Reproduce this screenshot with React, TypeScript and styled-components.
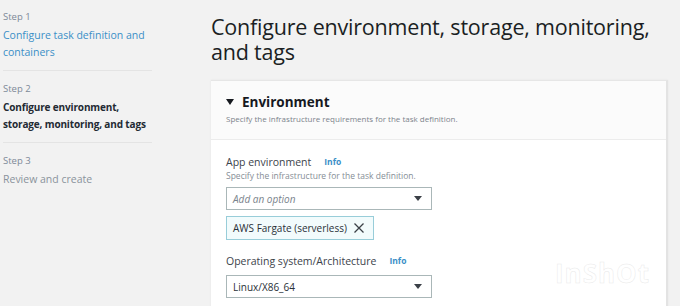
import React from "react";
import styled, { createGlobalStyle } from "styled-components";

const Global = createGlobalStyle`
  html, body { margin: 0; padding: 0; background: #f2f2f2; }
  body { font-family: "Open Sans", "Noto Sans", Arial, sans-serif; color: #16191f; }
`;

const Page = styled.div`
  width: 680px;
  height: 306px;
  overflow: hidden;
  display: grid;
  grid-template-columns: 149px 1fr;
  column-gap: 59px;
  padding-left: 3px;
  box-sizing: border-box;
  background: #f2f2f2;
  position: relative;
`;

const Nav = styled.nav`
  display: flex;
  flex-direction: column;
  padding-top: 10px;
`;

const NavStep = styled.div<{ $last?: boolean }>`
  padding-bottom: 9px;
  margin-bottom: 11px;
  border-bottom: ${(p) => (p.$last ? "none" : "1px solid #e4e4e4")};
`;

const StepLabel = styled.div`
  font-size: 9.5px;
  line-height: 14px;
  color: #7d8998;
  margin-bottom: 3px;
`;

const StepTitle = styled.div<{ $state: "link" | "current" | "todo" }>`
  font-size: ${(p) => (p.$state === "current" ? "10px" : "10.5px")};
  line-height: 17px;
  font-weight: ${(p) => (p.$state === "current" ? 700 : 400)};
  color: ${(p) =>
    p.$state === "link" ? "#3a8fc7" : p.$state === "current" ? "#232a33" : "#8a939c"};
  white-space: nowrap;
  letter-spacing: ${(p) => (p.$state === "current" ? "-0.15px" : "0")};
`;

const Main = styled.main`
  display: flex;
  flex-direction: column;
  padding-top: 14px;
  padding-right: 12px;
`;

const Heading = styled.h1`
  margin: 0 0 16px 0;
  font-size: 21.5px;
  line-height: 25px;
  font-weight: 400;
  color: #1b1f24;
  letter-spacing: -0.2px;
`;

const Card = styled.section`
  background: #ffffff;
  border-top: 1px solid #e6e6e6;
  border-right: 2px solid #e3e3e3;
  box-shadow: 0 0 2px rgba(0, 0, 0, 0.06);
`;

const CardHeader = styled.header`
  background: #fbfbfb;
  border-bottom: 1px solid #ececec;
  padding: 12px 15px 12px 15px;
  height: 59px;
  box-sizing: border-box;
`;

const HeaderTitle = styled.div`
  display: flex;
  align-items: center;
  gap: 8px;
  font-size: 13.5px;
  line-height: 18px;
  font-weight: 700;
  color: #16191f;
`;

const Caret = styled.span`
  width: 0;
  height: 0;
  border-left: 4px solid transparent;
  border-right: 4px solid transparent;
  border-top: 6px solid #16191f;
`;

const HeaderDesc = styled.div`
  font-size: 8px;
  line-height: 14px;
  color: #7b838c;
  margin-top: 1px;
`;

const CardBody = styled.div`
  padding: 15px 15px 0 15px;
  display: flex;
  flex-direction: column;
`;

const Field = styled.div`
  display: flex;
  flex-direction: column;
  margin-bottom: 14px;
`;

const Label = styled.div`
  display: flex;
  align-items: center;
  gap: 13px;
  font-size: 10.5px;
  line-height: 14px;
  color: #3c434b;
`;

const Info = styled.span`
  font-size: 8.5px;
  font-weight: 700;
  color: #3a8fc7;
`;

const Hint = styled.div`
  font-size: 8.5px;
  line-height: 13px;
  color: #868e96;
`;

const Select = styled.div<{ $placeholder?: boolean }>`
  width: 206px;
  height: 23px;
  box-sizing: border-box;
  border: 1px solid #aab7b8;
  background: #fff;
  display: flex;
  align-items: center;
  justify-content: space-between;
  padding: 0 9px 0 6px;
  font-size: 10px;
  color: ${(p) => (p.$placeholder ? "#7a838c" : "#2a3038")};
  font-style: ${(p) => (p.$placeholder ? "italic" : "normal")};
  margin-top: ${(p) => (p.$placeholder ? "5px" : "7px")};
`;

const SelectCaret = styled.span`
  width: 0;
  height: 0;
  border-left: 4px solid transparent;
  border-right: 4px solid transparent;
  border-top: 5px solid #3b4047;
`;

const Token = styled.div`
  align-self: flex-start;
  margin-top: 6px;
  width: 148px;
  height: 24px;
  box-sizing: border-box;
  border: 1px solid #98cdd9;
  background: #f2fbfc;
  display: flex;
  align-items: center;
  gap: 6px;
  padding: 0 6px;
  font-size: 10px;
  color: #2a3038;
`;

const Watermark = styled.div`
  position: absolute;
  left: 555px;
  top: 255px;
  font-family: "Open Sans", sans-serif;
  font-size: 26px;
  font-weight: 700;
  color: rgba(255, 255, 255, 0.9);
  -webkit-text-stroke: 0.5px rgba(210, 210, 210, 0.5);
  letter-spacing: 1px;
  pointer-events: none;
`;

export default function App() {
  return (
    <>
      <Global />
      <Page>
        <Nav>
          <NavStep>
            <StepLabel>Step 1</StepLabel>
            <StepTitle $state="link">
              Configure task definition and
              <br />
              containers
            </StepTitle>
          </NavStep>
          <NavStep>
            <StepLabel>Step 2</StepLabel>
            <StepTitle $state="current">
              Configure environment,
              <br />
              storage, monitoring, and tags
            </StepTitle>
          </NavStep>
          <NavStep $last>
            <StepLabel>Step 3</StepLabel>
            <StepTitle $state="todo">Review and create</StepTitle>
          </NavStep>
        </Nav>
        <Main>
          <Heading>
            Configure environment, storage, monitoring,
            <br />
            and tags
          </Heading>
          <Card>
            <CardHeader>
              <HeaderTitle>
                <Caret />
                Environment
              </HeaderTitle>
              <HeaderDesc>Specify the infrastructure requirements for the task definition.</HeaderDesc>
            </CardHeader>
            <CardBody>
              <Field>
                <Label>
                  App environment <Info>Info</Info>
                </Label>
                <Hint>Specify the infrastructure for the task definition.</Hint>
                <Select $placeholder>
                  Add an option
                  <SelectCaret />
                </Select>
                <Token>
                  AWS Fargate (serverless)
                  <svg width="12" height="12" viewBox="0 0 12 12" aria-hidden>
                    <path d="M1.5 1.5 L10.5 10.5 M10.5 1.5 L1.5 10.5" stroke="#3b4047" strokeWidth="1.3" fill="none" />
                  </svg>
                </Token>
              </Field>
              <Field>
                <Label>
                  Operating system/Architecture <Info>Info</Info>
                </Label>
                <Select>
                  Linux/X86_64
                  <SelectCaret />
                </Select>
              </Field>
            </CardBody>
          </Card>
        </Main>
        <Watermark>InShOt</Watermark>
      </Page>
    </>
  );
}
